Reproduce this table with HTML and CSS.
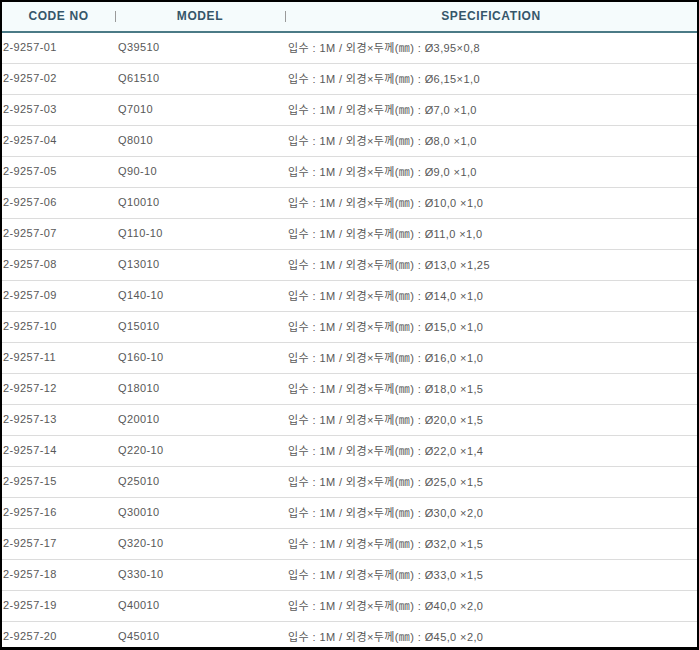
FILE: index.html
```html
<!DOCTYPE html>
<html lang="ko">
<head>
<meta charset="utf-8">
<title>Spec table</title>
<link rel="stylesheet" href="styles.css">
</head>
<body>
<div class="frame">
  <div class="row head">
    <div class="cell c1">CODE NO</div>
    <div class="cell c2">MODEL</div>
    <div class="cell c3">SPECIFICATION</div>
  </div>
  <div class="row"><div class="cell c1">2-9257-01</div><div class="cell c2">Q39510</div><div class="cell c3">입수 : 1M / 외경×두께(㎜) : Ø3,95×0,8</div></div>
  <div class="row"><div class="cell c1">2-9257-02</div><div class="cell c2">Q61510</div><div class="cell c3">입수 : 1M / 외경×두께(㎜) : Ø6,15×1,0</div></div>
  <div class="row"><div class="cell c1">2-9257-03</div><div class="cell c2">Q7010</div><div class="cell c3">입수 : 1M / 외경×두께(㎜) : Ø7,0 ×1,0</div></div>
  <div class="row"><div class="cell c1">2-9257-04</div><div class="cell c2">Q8010</div><div class="cell c3">입수 : 1M / 외경×두께(㎜) : Ø8,0 ×1,0</div></div>
  <div class="row"><div class="cell c1">2-9257-05</div><div class="cell c2">Q90-10</div><div class="cell c3">입수 : 1M / 외경×두께(㎜) : Ø9,0 ×1,0</div></div>
  <div class="row"><div class="cell c1">2-9257-06</div><div class="cell c2">Q10010</div><div class="cell c3">입수 : 1M / 외경×두께(㎜) : Ø10,0 ×1,0</div></div>
  <div class="row"><div class="cell c1">2-9257-07</div><div class="cell c2">Q110-10</div><div class="cell c3">입수 : 1M / 외경×두께(㎜) : Ø11,0 ×1,0</div></div>
  <div class="row"><div class="cell c1">2-9257-08</div><div class="cell c2">Q13010</div><div class="cell c3">입수 : 1M / 외경×두께(㎜) : Ø13,0 ×1,25</div></div>
  <div class="row"><div class="cell c1">2-9257-09</div><div class="cell c2">Q140-10</div><div class="cell c3">입수 : 1M / 외경×두께(㎜) : Ø14,0 ×1,0</div></div>
  <div class="row"><div class="cell c1">2-9257-10</div><div class="cell c2">Q15010</div><div class="cell c3">입수 : 1M / 외경×두께(㎜) : Ø15,0 ×1,0</div></div>
  <div class="row"><div class="cell c1">2-9257-11</div><div class="cell c2">Q160-10</div><div class="cell c3">입수 : 1M / 외경×두께(㎜) : Ø16,0 ×1,0</div></div>
  <div class="row"><div class="cell c1">2-9257-12</div><div class="cell c2">Q18010</div><div class="cell c3">입수 : 1M / 외경×두께(㎜) : Ø18,0 ×1,5</div></div>
  <div class="row"><div class="cell c1">2-9257-13</div><div class="cell c2">Q20010</div><div class="cell c3">입수 : 1M / 외경×두께(㎜) : Ø20,0 ×1,5</div></div>
  <div class="row"><div class="cell c1">2-9257-14</div><div class="cell c2">Q220-10</div><div class="cell c3">입수 : 1M / 외경×두께(㎜) : Ø22,0 ×1,4</div></div>
  <div class="row"><div class="cell c1">2-9257-15</div><div class="cell c2">Q25010</div><div class="cell c3">입수 : 1M / 외경×두께(㎜) : Ø25,0 ×1,5</div></div>
  <div class="row"><div class="cell c1">2-9257-16</div><div class="cell c2">Q30010</div><div class="cell c3">입수 : 1M / 외경×두께(㎜) : Ø30,0 ×2,0</div></div>
  <div class="row"><div class="cell c1">2-9257-17</div><div class="cell c2">Q320-10</div><div class="cell c3">입수 : 1M / 외경×두께(㎜) : Ø32,0 ×1,5</div></div>
  <div class="row"><div class="cell c1">2-9257-18</div><div class="cell c2">Q330-10</div><div class="cell c3">입수 : 1M / 외경×두께(㎜) : Ø33,0 ×1,5</div></div>
  <div class="row"><div class="cell c1">2-9257-19</div><div class="cell c2">Q40010</div><div class="cell c3">입수 : 1M / 외경×두께(㎜) : Ø40,0 ×2,0</div></div>
  <div class="row"><div class="cell c1">2-9257-20</div><div class="cell c2">Q45010</div><div class="cell c3">입수 : 1M / 외경×두께(㎜) : Ø45,0 ×2,0</div></div>
</div>
</body>
</html>
```

FILE: styles.css
```css
html, body {
  margin: 0;
  padding: 0;
  background: #fff;
}

.frame {
  box-sizing: border-box;
  width: 699px;
  height: 650px;
  overflow: hidden;
  border-style: solid;
  border-color: #000;
  border-width: 2px 2px 3px 2px;
  background: #fff;
  font-family: "Liberation Sans", "Noto Sans CJK KR", sans-serif;
  font-size: 11px;
  letter-spacing: 0.4px;
  color: #585858;
}

.row {
  display: grid;
  grid-template-columns: 113px 170px 1fr;
  height: 30px;
  align-items: center;
  border-bottom: 1px solid #dcdcdc;
}

.cell {
  padding-left: 3px;
  padding-bottom: 3px;
  white-space: nowrap;
}

.c1 {
  padding-left: 1px;
}

.head {
  height: 29px;
  background: #f5fbfc;
  border-bottom: 2px solid #4b7a86;
  font-size: 12px;
  font-weight: bold;
  letter-spacing: 0.6px;
  color: #35566a;
}

.head .cell {
  padding-left: 0;
  padding-bottom: 0;
  text-align: center;
  line-height: 29px;
}

.head .c2,
.head .c3 {
  background: linear-gradient(#9a9a9a, #9a9a9a) no-repeat 0 center / 1px 11px;
}
```
